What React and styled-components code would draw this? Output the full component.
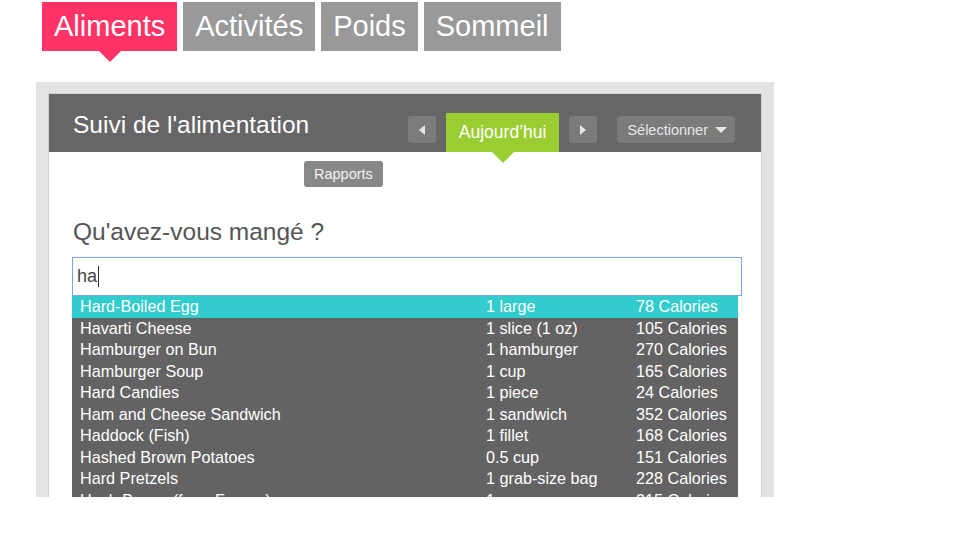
import React from "react";
import styled, { createGlobalStyle } from "styled-components";

const GlobalStyle = createGlobalStyle`
  body {
    margin: 0;
    background: #fff;
    font-family: "Liberation Sans", Arial, sans-serif;
  }
`;

const Viewport = styled.div`
  height: 497px;
  overflow: hidden;
`;

const Tabs = styled.nav`
  display: flex;
  gap: 6px;
  padding: 2px 0 0 42px;
`;

const Tab = styled.div`
  position: relative;
  height: 49px;
  padding: 0 12px;
  display: flex;
  align-items: center;
  font-size: 29px;
  color: #fff;
  background: ${(p) => (p.active ? "#ff3366" : "#999999")};
  &::after {
    content: "";
    display: ${(p) => (p.active ? "block" : "none")};
    position: absolute;
    left: 50%;
    bottom: -11px;
    margin-left: -11px;
    border-left: 11px solid transparent;
    border-right: 11px solid transparent;
    border-top: 11px solid #ff3366;
  }
`;

const Frame = styled.div`
  margin: 31px 0 0 36px;
  width: 714px;
  padding: 11px 12px 0;
  background: #e2e3e2;
`;

const Panel = styled.div`
  background: #fff;
  border: 1px solid #d2d2d2;
  border-bottom: none;
  height: 420px;
`;

const Header = styled.header`
  height: 58px;
  background: #666666;
  display: flex;
  align-items: flex-end;
  padding: 0 26px 0 24px;
`;

const Title = styled.h1`
  margin: 0 0 13px;
  flex: 1;
  font-size: 24.5px;
  font-weight: normal;
  color: #fff;
  line-height: 28px;
`;

const NavButton = styled.button`
  width: 28px;
  height: 27px;
  margin: 0 0 9px;
  padding: 0;
  border: none;
  border-radius: 3px;
  background: #7b7b7b;
  display: flex;
  align-items: center;
  justify-content: center;
`;

const Today = styled.div`
  position: relative;
  height: 39px;
  margin: 0 10px;
  padding: 0 13px;
  display: flex;
  align-items: center;
  font-size: 17.5px;
  color: #fff;
  background: #9acd32;
  &::after {
    content: "";
    position: absolute;
    left: 50%;
    bottom: -11px;
    margin-left: -11px;
    border-left: 11px solid transparent;
    border-right: 11px solid transparent;
    border-top: 11px solid #9acd32;
  }
`;

const Select = styled.button`
  height: 27px;
  margin: 0 0 9px 20px;
  padding: 0 8px 0 10px;
  border: none;
  border-radius: 4px;
  background: #7b7b7b;
  color: #e6e6e6;
  font-family: inherit;
  font-size: 14.5px;
  display: flex;
  align-items: center;
  gap: 7px;
`;

const Caret = styled.span`
  width: 0;
  height: 0;
  border-left: 6px solid transparent;
  border-right: 6px solid transparent;
  border-top: 6px solid #e6e6e6;
`;

const Body = styled.div`
  padding: 9px 19px 0 23px;
`;

const Reports = styled.button`
  display: block;
  margin-left: 232px;
  height: 26px;
  padding: 0 10px;
  border: none;
  border-radius: 3px;
  background: #888888;
  color: #f2f2f2;
  font-family: inherit;
  font-size: 14.5px;
`;

const Question = styled.h2`
  margin: 30px 0 0 1px;
  font-size: 24.5px;
  font-weight: normal;
  color: #555;
  line-height: 30px;
`;

const Search = styled.div`
  margin-top: 10px;
  height: 37px;
  border: 1px solid #7ba7f0;
  display: flex;
  align-items: center;
  padding-left: 4px;
  font-size: 18px;
  color: #444;
`;

const Cursor = styled.span`
  display: inline-block;
  width: 1px;
  height: 21px;
  background: #333;
  vertical-align: middle;
  margin-left: 1px;
`;

const List = styled.ul`
  list-style: none;
  margin: 0 4px 0 0;
  padding: 0;
  background: #636363;
`;

const Row = styled.li`
  display: grid;
  grid-template-columns: 406px 150px 1fr;
  height: 21.5px;
  line-height: 21.5px;
  padding-left: 8px;
  font-size: 16.2px;
  color: #fff;
  background: ${(p) => (p.selected ? "#33cccc" : "transparent")};
  white-space: nowrap;
`;

const foods = [
  ["Hard-Boiled Egg", "1 large", "78 Calories"],
  ["Havarti Cheese", "1 slice (1 oz)", "105 Calories"],
  ["Hamburger on Bun", "1 hamburger", "270 Calories"],
  ["Hamburger Soup", "1 cup", "165 Calories"],
  ["Hard Candies", "1 piece", "24 Calories"],
  ["Ham and Cheese Sandwich", "1 sandwich", "352 Calories"],
  ["Haddock (Fish)", "1 fillet", "168 Calories"],
  ["Hashed Brown Potatoes", "0.5 cup", "151 Calories"],
  ["Hard Pretzels", "1 grab-size bag", "228 Calories"],
  ["Hash Brown (from Frozen)", "1 cup", "315 Calories"],
];

const Arrow = ({ dir }) => (
  <svg width="8" height="10" viewBox="0 0 8 10">
    <path
      d={dir === "left" ? "M7 0 L1 5 L7 10 Z" : "M1 0 L7 5 L1 10 Z"}
      fill="#e6e6e6"
    />
  </svg>
);

export default function App() {
  return (
    <Viewport>
      <GlobalStyle />
      <Tabs>
        <Tab active>Aliments</Tab>
        <Tab>Activités</Tab>
        <Tab>Poids</Tab>
        <Tab>Sommeil</Tab>
      </Tabs>
      <Frame>
        <Panel>
          <Header>
            <Title>Suivi de l'alimentation</Title>
            <NavButton>
              <Arrow dir="left" />
            </NavButton>
            <Today>Aujourd’hui</Today>
            <NavButton>
              <Arrow dir="right" />
            </NavButton>
            <Select>
              Sélectionner <Caret />
            </Select>
          </Header>
          <Body>
            <Reports>Rapports</Reports>
            <Question>Qu'avez-vous mangé ?</Question>
            <Search>
              ha
              <Cursor />
            </Search>
            <List>
              {foods.map(([name, portion, cal], i) => (
                <Row key={name} selected={i === 0}>
                  <span>{name}</span>
                  <span>{portion}</span>
                  <span>{cal}</span>
                </Row>
              ))}
            </List>
          </Body>
        </Panel>
      </Frame>
    </Viewport>
  );
}
